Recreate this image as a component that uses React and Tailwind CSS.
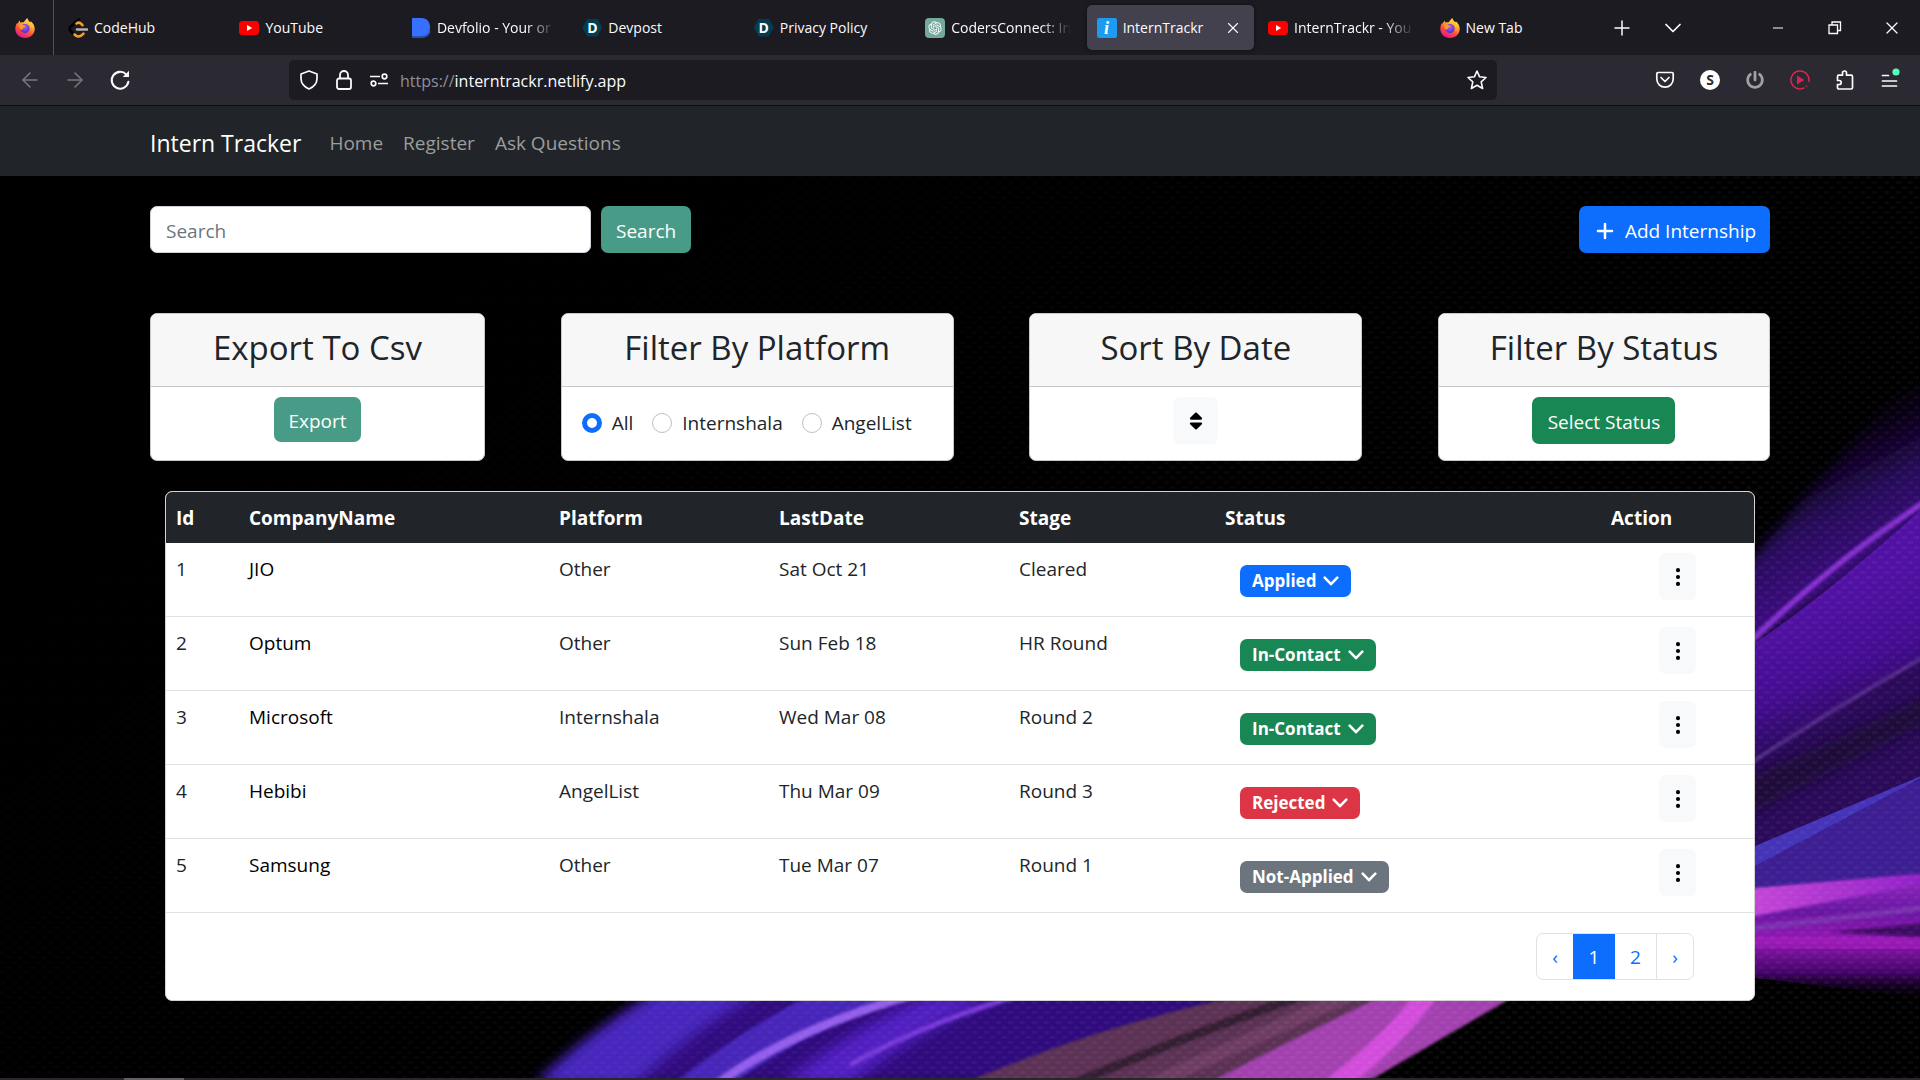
import { useState } from "react";
import { ArrowLeft, ArrowRight, ChevronDown, X, Plus, Minus } from "lucide-react";
import { FaSort, FaPowerOff } from "react-icons/fa";
import { BsThreeDotsVertical } from "react-icons/bs";
import { RiOpenaiFill } from "react-icons/ri";

const internships = [
  { id: 1, company: "JIO", platform: "Other", date: "Sat Oct 21", stage: "Cleared", status: "Applied" },
  { id: 2, company: "Optum", platform: "Other", date: "Sun Feb 18", stage: "HR Round", status: "In-Contact" },
  { id: 3, company: "Microsoft", platform: "Internshala", date: "Wed Mar 08", stage: "Round 2", status: "In-Contact" },
  { id: 4, company: "Hebibi", platform: "AngelList", date: "Thu Mar 09", stage: "Round 3", status: "Rejected" },
  { id: 5, company: "Samsung", platform: "Other", date: "Tue Mar 07", stage: "Round 1", status: "Not-Applied" },
];

const statusColors = {
  Applied: "bg-[#0d6efd]",
  "In-Contact": "bg-[#198754]",
  Rejected: "bg-[#dc3545]",
  "Not-Applied": "bg-[#6c757d]",
};

/* ---------- favicons ---------- */

function FirefoxIcon() {
  return (
    <svg viewBox="0 0 20 20" className="w-5 h-5 shrink-0">
      <defs>
        <linearGradient id="foxBody" x1="0.8" y1="0" x2="0.3" y2="1">
          <stop offset="0" stopColor="#fff44f" />
          <stop offset="0.35" stopColor="#ffb02e" />
          <stop offset="0.65" stopColor="#ff4f3f" />
          <stop offset="1" stopColor="#e31587" />
        </linearGradient>
        <radialGradient id="foxGlobe" cx="0.5" cy="0.35" r="0.7">
          <stop offset="0" stopColor="#a65cff" />
          <stop offset="1" stopColor="#4a2bc4" />
        </radialGradient>
      </defs>
      <path d="M12.4 0c.5 2.2 1.6 3 2.9 4.300.4-.1.5-.6.5-1C18.400 5.300 19.700 8 19.700 11c0 5-4.300 9-9.700 9S.3 16 .3 11c0-2.500.7-4.600 1.900-6.300l.4 1.300c.4-1.400 1.200-2.500 2.200-3.400l.3 2c1-.5 2.300-.6 3.500-.3C9.700 3 10.700 1.300 12.400 0z" fill="url(#foxBody)" />
      <circle cx="10" cy="10.6" r="4.600" fill="url(#foxGlobe)" />
      <path d="M4 7c1.600-.8 3-.5 4.300.2 1 0 2.300.2 2.700.8-.4.900-2 1.100-2.500 1.500-.2 1.500-1.500 1.800-2 2.600C5 11 4.200 9 4 7z" fill="#ff9a2a" />
    </svg>
  );
}

function LeetIcon() {
  return (
    <svg viewBox="0 0 20 20" className="w-5 h-5 shrink-0" fill="none" strokeWidth="2.600" strokeLinecap="round">
      <path d="M11 1.300L2.300 9c-1 1-1 2.500 0 3.500L5.500 16" stroke="#000" />
      <path d="M8.500 5.500c2-1.500 4-1 6 1.700" stroke="#f89f1b" />
      <path d="M6.500 16.500c2.800 2.800 5.800 2.700 9-.8" stroke="#f89f1b" />
      <path d="M9 11.500h10" stroke="#b3b3b3" />
    </svg>
  );
}

function YoutubeIcon() {
  return (
    <svg viewBox="0 0 20 20" className="w-5 h-5 shrink-0">
      <rect y="3" width="20" height="14" rx="3.500" fill="#f00" />
      <path d="M8 7v6l5.200-3z" fill="#fff" />
    </svg>
  );
}

function DevfolioIcon() {
  return (
    <svg viewBox="0 0 20 20" className="w-5 h-5 shrink-0">
      <path d="M1 15.500V19c0 .6.400 1 1 1h8.500c5 0 8.500-3 9-7z" fill="#2a4fae" />
      <path d="M2 0h8.500C16 0 19 4 19 9.500S15.500 18 10.500 18H2c-.6 0-1-.4-1-1V1c0-.6.400-1 1-1z" fill="#3770ff" />
    </svg>
  );
}

function DevpostIcon() {
  return (
    <span className="w-5 h-[18px] shrink-0 flex items-center justify-center bg-[#003e54] text-white text-[14px] leading-none font-bold [clip-path:polygon(25%_0,75%_0,100%_50%,75%_100%,25%_100%,0_50%)]">
      D
    </span>
  );
}

function OpenaiIcon() {
  return (
    <span className="w-5 h-5 shrink-0 rounded-[4px] bg-[#74aa9c] flex items-center justify-center">
      <RiOpenaiFill className="w-4 h-4 text-white" />
    </span>
  );
}

function InfoIcon() {
  return (
    <span className="w-5 h-5 shrink-0 rounded-[2px] bg-[#1d9bf0] flex items-center justify-center text-white text-[18px] leading-none italic font-bold font-['Liberation_Serif',serif]">
      i
    </span>
  );
}

const tabs = [
  { title: "CodeHub", icon: LeetIcon },
  { title: "YouTube", icon: YoutubeIcon },
  { title: "Devfolio - Your or", icon: DevfolioIcon, long: true },
  { title: "Devpost", icon: DevpostIcon },
  { title: "Privacy Policy", icon: DevpostIcon },
  { title: "CodersConnect: In", icon: OpenaiIcon, long: true },
  { title: "InternTrackr", icon: InfoIcon, active: true },
  { title: "InternTrackr - You", icon: YoutubeIcon, long: true },
  { title: "New Tab", icon: FirefoxIcon },
];

/* ---------- browser frame ---------- */

function TabBar() {
  return (
    <div className="h-[55px] bg-[#1c1b22] text-[#fbfbfe] flex items-center">
      <div className="w-[54px] h-full pl-[15px] flex items-center border-r border-[#52525e]">
        <FirefoxIcon />
      </div>
      <div className="flex flex-1 max-w-[1545px] min-w-0 pl-[2px]">
        {tabs.map((tab, i) => (
          <div key={i} className="flex-1 min-w-0 px-[2px]">
            <div className={`h-[45px] rounded-[5px] pl-[10px] pr-3 flex items-center gap-[6px] ${tab.active ? "bg-[#42414d] shadow-[0_0_4px_rgba(0,0,0,0.5)]" : ""}`}>
              <tab.icon />
              <span className={`flex-1 min-w-0 whitespace-nowrap text-[14px] leading-5 ${tab.long ? "[mask-image:linear-gradient(to_right,#000_75%,transparent)]" : ""}`}>
                {tab.title}
              </span>
              {tab.active && (
                <button aria-label="Close tab">
                  <X className="w-[18px] h-[18px]" strokeWidth={1.5} />
                </button>
              )}
            </div>
          </div>
        ))}
      </div>
      <button aria-label="New tab" className="w-[46px] flex justify-center">
        <Plus className="w-6 h-6" strokeWidth={1.5} />
      </button>
      <button aria-label="List all tabs" className="w-14 flex justify-center">
        <ChevronDown className="w-7 h-7" strokeWidth={1.5} />
      </button>
      <div className="ml-auto flex items-center">
        <button aria-label="Minimize" className="w-[57px] flex justify-center">
          <Minus className="w-4 h-4" strokeWidth={1.5} />
        </button>
        <button aria-label="Restore" className="w-[57px] flex justify-center">
          <svg viewBox="0 0 14 14" className="w-[14px] h-[14px]" fill="none" stroke="currentColor" strokeWidth="1.300">
            <path d="M1 4h8.500v8.500H1zM4 4V1h8.500v8.500H9.500" />
          </svg>
        </button>
        <button aria-label="Close" className="w-[57px] flex justify-center">
          <X className="w-5 h-5" strokeWidth={1.5} />
        </button>
      </div>
    </div>
  );
}

function Toolbar() {
  return (
    <div className="h-[51px] bg-[#2b2a33] border-b border-[#0c0c0d] text-[#fbfbfe] flex items-center">
      <div className="w-[289px] shrink-0 pl-[18px] flex items-center gap-[21px]">
        <button aria-label="Back"><ArrowLeft className="w-6 h-6 text-[#79787f]" strokeWidth={1.5} /></button>
        <button aria-label="Forward"><ArrowRight className="w-6 h-6 text-[#79787f]" strokeWidth={1.5} /></button>
        <button aria-label="Reload">
          <svg viewBox="0 0 20 20" className="w-6 h-6" fill="none" stroke="currentColor" strokeWidth="1.700" strokeLinecap="round">
            <path d="M17 11.500A7 7 0 1 1 15.300 5.500" />
            <path d="M17.500 2.300V7.500h-5.200z" fill="currentColor" stroke="none" />
          </svg>
        </button>
      </div>
      <div className="flex-1 h-10 rounded-[5px] bg-[#1c1b22] px-[10px] flex items-center gap-[15px]">
        <svg viewBox="0 0 20 20" className="w-5 h-5" fill="none" stroke="currentColor" strokeWidth="1.700" strokeLinejoin="round">
          <path d="M10 1l8 3v4.500c0 4.500-3.500 8.500-8 10.500-4.500-2-8-6-8-10.500V4z" />
        </svg>
        <svg viewBox="0 0 20 20" className="w-5 h-5" fill="none" stroke="currentColor" strokeWidth="1.800">
          <rect x="3" y="8.500" width="14" height="10.500" rx="2" />
          <path d="M6 8.500V5a4 4 0 0 1 8 0v3.500" />
        </svg>
        <svg viewBox="0 0 20 20" className="w-5 h-5" fill="none" stroke="currentColor" strokeWidth="1.700">
          <path d="M1 6.500h10M9 13.500h10" />
          <circle cx="15.500" cy="6.500" r="2.300" />
          <circle cx="4.500" cy="13.500" r="2.300" />
        </svg>
        <span className="flex-1 -ml-1 pt-[2px] text-[16px] leading-6 whitespace-nowrap text-[#8f8f9d]">
          https://<span className="text-[#fbfbfe]">interntrackr.netlify.app</span>
        </span>
        <button aria-label="Bookmark this page">
          <svg viewBox="0 0 20 20" className="w-5 h-5" fill="none" stroke="currentColor" strokeWidth="1.600" strokeLinejoin="round">
            <path d="M10 1l2.600 5.800 6.400.7-4.800 4.300 1.400 6.700L10 15.200l-5.600 3.300 1.400-6.700L1 7.500l6.400-.7z" />
          </svg>
        </button>
      </div>
      <div className="w-[423px] shrink-0 pr-5 flex justify-end items-center gap-[25px]">
        <button aria-label="Save to Pocket">
          <svg viewBox="0 0 20 20" className="w-5 h-5" fill="none" stroke="currentColor" strokeWidth="1.700" strokeLinecap="round" strokeLinejoin="round">
            <path d="M3 2.500h14c.7 0 1.200.5 1.200 1.200V9a8.200 8.200 0 0 1-16.400 0V3.700c0-.7.500-1.200 1.200-1.200z" />
            <path d="M6 7.500l4 4 4-4" />
          </svg>
        </button>
        <button className="w-5 h-5 rounded-full bg-white text-[#2b2a33] text-[14px] leading-none font-bold flex items-center justify-center">S</button>
        <button aria-label="Power"><FaPowerOff className="w-5 h-[18px] text-[#a0a0a4]" /></button>
        <button aria-label="Play">
          <svg viewBox="0 0 20 20" className="w-5 h-5">
            <path d="M14.500 17.700A9 9 0 1 1 18.700 12M17 15.800l-.8.8" fill="none" stroke="#e0254f" strokeWidth="1.500" />
            <path d="M7 5.500v9l7.500-4.500z" fill="#d8234c" />
          </svg>
        </button>
        <button aria-label="Extensions">
          <svg viewBox="0 0 20 20" className="w-5 h-5" fill="none" stroke="currentColor" strokeWidth="1.700" strokeLinejoin="round">
            <path d="M2.500 6.500c0-.8.500-1.300 1.300-1.300H7.500V3a2 2 0 0 1 4 0v2.200h4.700c.8 0 1.300.5 1.300 1.300v11.300c0 .7-.5 1.200-1.300 1.200H3.800c-.8 0-1.300-.5-1.300-1.200v-3.300h1.700a2 2 0 0 0 0-4H2.500z" />
          </svg>
        </button>
        <button aria-label="Menu">
          <svg viewBox="0 0 20 24" className="w-5 h-6" fill="none" stroke="currentColor" strokeWidth="1.700" strokeLinecap="round">
            <path d="M2.500 7.500h6M2.500 13h14M2.500 18h14" />
            <circle cx="16" cy="4" r="3.600" fill="#54ffbd" stroke="none" />
          </svg>
        </button>
      </div>
    </div>
  );
}

/* ---------- page ---------- */

function Wallpaper() {
  return (
    <svg viewBox="0 176 1920 902" preserveAspectRatio="none" className="absolute inset-0 w-full h-full -z-10" aria-hidden="true">
      <defs>
        <pattern id="weave" width="12" height="10" patternUnits="userSpaceOnUse">
          <rect width="12" height="10" fill="#000" fillOpacity="0.1" />
          <rect x="0" y="1" width="5" height="3" fill="#fff" fillOpacity="0.04" />
          <rect x="6" y="6" width="5" height="3" fill="#fff" fillOpacity="0.04" />
        </pattern>
        <linearGradient id="weaveFade" x1="0" x2="1" y1="0" y2="0.6">
          <stop offset="0.2" stopColor="#fff" stopOpacity="0" />
          <stop offset="0.9" stopColor="#fff" />
        </linearGradient>
        <mask id="weaveMask" maskUnits="userSpaceOnUse" x="0" y="176" width="1920" height="904">
          <rect y="176" width="1920" height="904" fill="url(#weaveFade)" />
        </mask>
        <linearGradient id="haze" gradientUnits="userSpaceOnUse" x1="1790" y1="440" x2="1870" y2="590">
          <stop offset="0" stopColor="#1a0536" stopOpacity="0" />
          <stop offset="0.5" stopColor="#2c0b66" />
          <stop offset="1" stopColor="#4a109a" />
        </linearGradient>
        <linearGradient id="violet" gradientUnits="userSpaceOnUse" x1="1810" y1="600" x2="1870" y2="740">
          <stop offset="0" stopColor="#5c14b8" />
          <stop offset="0.5" stopColor="#4c0ea2" />
          <stop offset="1" stopColor="#240b4c" />
        </linearGradient>
        <linearGradient id="ember" x1="0" x2="0" y1="0" y2="1">
          <stop offset="0" stopColor="#a930dc" />
          <stop offset="0.3" stopColor="#7419b4" />
          <stop offset="0.52" stopColor="#a51bc8" />
          <stop offset="0.78" stopColor="#4c0678" />
          <stop offset="1" stopColor="#12001f" stopOpacity="0" />
        </linearGradient>
        <linearGradient id="flare" x1="0" x2="1" y1="0" y2="0">
          <stop offset="0.2" stopColor="#dc50f0" />
          <stop offset="1" stopColor="#9c22dc" />
        </linearGradient>
        <filter id="soft1"><feGaussianBlur stdDeviation="1.500" /></filter>
        <filter id="soft6"><feGaussianBlur stdDeviation="7" /></filter>
      </defs>
      <rect y="176" width="1920" height="904" fill="#000" />

      {/* rays on the right */}
      <path d="M1700 620L1940 340V520L1700 680z" fill="url(#haze)" filter="url(#soft6)" />
      <path d="M1700 672L1755 643Q1840 585 1940 492V670L1700 800z" fill="url(#violet)" />
      <path d="M1700 785L1940 650V790L1700 880z" fill="#2f0c64" />
      <path d="M1700 800L1940 690V716L1700 840z" fill="#200a40" filter="url(#soft6)" />
      <path d="M1740 652Q1830 562 1940 492" fill="none" stroke="#9436e8" strokeWidth="6" filter="url(#soft1)" />
      <path d="M1740 770Q1830 710 1940 648" fill="none" stroke="#60309c" strokeWidth="4" filter="url(#soft1)" />
      <path d="M1700 880L1940 770V880L1700 900z" fill="#4422a4" />
      <path d="M1700 865L1755 846L1940 768L1700 895z" fill="#4d3acc" />
      <path d="M1700 893L1940 874V1000L1755 978L1700 970z" fill="url(#ember)" />
      <path d="M1700 938L1940 948" stroke="#b824d4" strokeWidth="10" filter="url(#soft6)" />
      <path d="M1700 893L1940 872V880L1755 916L1700 926z" fill="url(#flare)" filter="url(#soft1)" />
      <path d="M1740 930L1940 906" stroke="#8a38c4" strokeWidth="6" filter="url(#soft1)" />
      <path d="M1830 932L1940 922V938z" fill="#45086c" filter="url(#soft1)" />

      {/* rays along the bottom */}
      <path d="M540 1085Q600 1030 660 990L1270 990L1020 1085z" fill="#35108a" filter="url(#soft6)" />
      <path d="M535 1085Q590 1030 665 990H765Q690 1030 635 1085z" fill="#4d2ccc" filter="url(#soft6)" />
      <path d="M672 1085Q740 1030 820 990H905Q810 1030 730 1085z" fill="#4d2ac8" filter="url(#soft1)" />
      <path d="M780 1085Q850 1030 930 995H1000Q900 1040 850 1085z" fill="#5a22d4" filter="url(#soft6)" />
      <path d="M716 1085Q790 1030 912 995" fill="none" stroke="#a066ff" strokeWidth="9" filter="url(#soft1)" />
      <path d="M850 1065Q920 1025 1020 995" fill="none" stroke="#8440ee" strokeWidth="5" filter="url(#soft1)" />
      <path d="M960 1085Q1110 1020 1270 990H1410L1220 1085z" fill="#66385f" filter="url(#soft1)" />
      <path d="M1070 1085Q1200 1030 1305 995" fill="none" stroke="#3a2038" strokeWidth="9" filter="url(#soft1)" />
      <path d="M1150 1085Q1270 1030 1350 995" fill="none" stroke="#7b4470" strokeWidth="14" filter="url(#soft1)" />
      <path d="M1205 1085Q1310 1030 1395 990H1525L1362 1085z" fill="#b64ac4" filter="url(#soft1)" />
      <path d="M1335 1085Q1395 1040 1430 990" fill="none" stroke="#ea56f4" strokeWidth="20" filter="url(#soft1)" />

      <rect y="176" width="1920" height="904" fill="url(#weave)" mask="url(#weaveMask)" />
    </svg>
  );
}

function Card({ title, className, children }) {
  return (
    <section className={`rounded-[7px] border border-[#c8c8c8] bg-white overflow-hidden ${className}`}>
      <div className="h-[73px] pt-3 bg-[#f7f7f7] border-b border-[#c8c8c8] text-center">
        <h3 className="text-[33px] leading-[44px]">{title}</h3>
      </div>
      <div className="h-[73px] pt-[10px] flex justify-center items-start">{children}</div>
    </section>
  );
}

export default function App() {
  const [platform, setPlatform] = useState("All");
  const [page, setPage] = useState(1);

  return (
    <div className="min-h-screen flex flex-col bg-black text-[#212529] text-[19px] leading-[30px] font-['Open_Sans','Noto_Sans',sans-serif]">
      <header>
        <TabBar />
        <Toolbar />
      </header>

      <nav className="h-[70px] bg-[#212529] px-[150px] pt-1 flex items-center text-[#9b9d9f]">
        <a href="#" className="text-white text-[23px] mr-7">Intern Tracker</a>
        <div className="flex gap-5">
          <a href="#">Home</a>
          <a href="#">Register</a>
          <a href="#">Ask Questions</a>
        </div>
      </nav>

      <main className="relative isolate flex-1 overflow-hidden px-[150px] pt-[30px]">
        <Wallpaper />

        <div className="flex justify-between">
          <form className="flex gap-[10px]" onSubmit={(e) => e.preventDefault()}>
            <input
              type="search"
              aria-label="Search"
              placeholder="Search"
              className="w-[441px] h-[47px] px-[15px] pt-[2px] rounded-[7px] border border-[#ced4da] bg-white placeholder:text-[#6c757d]"
            />
            <button className="h-[47px] px-[15px] pt-[2px] rounded-[7px] bg-[#489c87] text-white">Search</button>
          </form>
          <button className="h-[47px] w-[191px] pt-[2px] rounded-[7px] bg-[#0d6efd] text-white flex items-center justify-center gap-2">
            <Plus className="w-6 h-6" strokeWidth={2.5} />
            Add Internship
          </button>
        </div>

        {/* Filters */}
        <div className="mt-[60px] flex justify-between">
          <Card title="Export To Csv" className="w-[335px]">
            <button className="h-[45px] w-[87px] pt-[2px] rounded-[7px] bg-[#489c87] text-white">Export</button>
          </Card>
          <Card title="Filter By Platform" className="w-[393px]">
            <div className="w-full h-[51px] pl-5 flex items-center gap-[19px]">
              {["All", "Internshala", "AngelList"].map((p) => (
                <label key={p} className="flex items-center gap-[10px]">
                  <input
                    type="radio"
                    name="platform"
                    checked={platform === p}
                    onChange={() => setPlatform(p)}
                    className="appearance-none w-5 h-5 rounded-full border border-[#bfbfbf] bg-white checked:border-[5px] checked:border-[#0d6efd]"
                  />
                  {p}
                </label>
              ))}
            </div>
          </Card>
          <Card title="Sort By Date" className="w-[333px]">
            <button aria-label="Sort" className="w-[45px] h-[47px] rounded-[7px] bg-[#f8f9fa] text-black flex items-center justify-center">
              <FaSort className="w-[22px] h-[22px]" />
            </button>
          </Card>
          <Card title="Filter By Status" className="w-[332px]">
            <button className="h-[47px] w-[143px] pt-[2px] rounded-[7px] bg-[#198754] text-white">Select Status</button>
          </Card>
        </div>

        {/* Table */}
        <div className="mt-[30px] mx-[15px] rounded-[7px] border border-[#d3d3d3] bg-white overflow-hidden">
          <table className="w-full table-fixed border-separate border-spacing-0 text-left">
            <colgroup>
              <col className="w-[73px]" />
              <col className="w-[310px]" />
              <col className="w-[220px]" />
              <col className="w-[240px]" />
              <col className="w-[206px]" />
              <col />
              <col className="w-[153px]" />
            </colgroup>
            <thead>
              <tr className="h-[51px] bg-[#212529] text-white">
                {["Id", "CompanyName", "Platform", "LastDate", "Stage", "Status", "Action"].map((h) => (
                  <th key={h} className="px-[10px] text-[19px] font-bold">{h}</th>
                ))}
              </tr>
            </thead>
            <tbody className="[&_td]:border-b [&_td]:border-[#dee2e6]">
              {internships.map((row) => (
                <tr key={row.id} className="h-[74px] align-top">
                  <td className="px-[10px] pt-[11px]">{row.id}</td>
                  <td className="px-[10px] pt-[11px] text-black">{row.company}</td>
                  <td className="px-[10px] pt-[11px]">{row.platform}</td>
                  <td className="px-[10px] pt-[11px]">{row.date}</td>
                  <td className="px-[10px] pt-[11px]">{row.stage}</td>
                  <td className="pl-[25px] pt-[22px]">
                    <button className={`h-8 px-3 rounded-[7px] text-white text-[17px] leading-8 font-bold flex items-center gap-[7px] ${statusColors[row.status]}`}>
                      {row.status}
                      <svg viewBox="0 0 16 10" className="w-4 h-[10px]" fill="none" stroke="currentColor" strokeWidth="2.600" strokeLinecap="round" strokeLinejoin="round">
                        <path d="M1.700 1.700L8 8.200l6.300-6.500" />
                      </svg>
                    </button>
                  </td>
                  <td className="pl-[58px] pt-[10px]">
                    <button aria-label="Row actions" className="w-[37px] h-[47px] rounded-[7px] bg-[#f8f9fa] text-black flex items-center justify-center">
                      <BsThreeDotsVertical className="w-[22px] h-[22px]" />
                    </button>
                  </td>
                </tr>
              ))}
            </tbody>
          </table>

          <div className="h-[87px] pr-[60px] pt-5 flex justify-end">
            <div className="h-[47px] flex rounded-[7px] border border-[#dee2e6] overflow-hidden text-[#0d6efd]">
              <button className="w-9" onClick={() => setPage(1)}>‹</button>
              {[1, 2].map((n) => (
                <button key={n} onClick={() => setPage(n)} className={`w-[42px] ${page === n ? "bg-[#0d6efd] text-white" : "border-r border-[#dee2e6]"}`}>
                  {n}
                </button>
              ))}
              <button className="w-9" onClick={() => setPage(2)}>›</button>
            </div>
          </div>
        </div>
      </main>

      <footer className="h-[2px] bg-[#29272a] flex">
        <div className="ml-[124px] w-[60px] bg-[#626063]" />
      </footer>
    </div>
  );
}
